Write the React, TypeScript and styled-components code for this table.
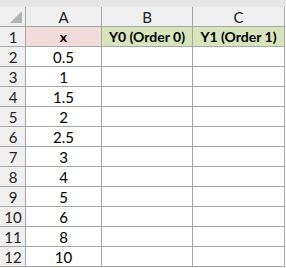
import React from "react";
import styled, { createGlobalStyle } from "styled-components";

const GlobalStyle = createGlobalStyle`
  html, body {
    margin: 0;
    padding: 0;
    background: #ffffff;
    font-family: Lato, "Liberation Sans", sans-serif;
  }
`;

const Sheet = styled.div`
  width: 286px;
  height: 268px;
  overflow: hidden;
  background: #ffffff;
`;

const TopStrip = styled.div`
  height: 7px;
  background: #e6e6e6;
`;

const Grid = styled.div`
  display: grid;
  grid-template-columns: 26px 76px 91px 92px 1fr;
  grid-auto-rows: 20px;
`;

const Cell = styled.div<{ $bg?: string; $bold?: boolean; $head?: boolean }>`
  box-sizing: border-box;
  display: flex;
  align-items: center;
  justify-content: center;
  border-right: 1px solid #a6a6a6;
  border-bottom: 1px solid #a6a6a6;
  background: ${(p) => p.$bg || "#ffffff"};
  font-size: ${(p) => (p.$bold ? "14px" : "15px")};
  font-weight: ${(p) => (p.$bold ? 700 : 400)};
  color: ${(p) => (p.$head ? "#222222" : "#000000")};
  white-space: nowrap;
  overflow: hidden;
`;

const Gap = styled.div`
  background: #ffffff;
`;

const Corner = styled(Cell)`
  background: #f0f0f0;
  align-items: flex-end;
  justify-content: flex-end;
  padding: 0 3px 3px 0;
`;

const RowHead = styled(Cell)`
  background: #f0f0f0;
  padding-left: 1px;
`;

const ColHead = styled(Cell)`
  background: #f0f0f0;
`;

const x = ["0.5", "1", "1.5", "2", "2.5", "3", "4", "5", "6", "8", "10"];

const App: React.FC = () => {
  return (
    <Sheet>
      <GlobalStyle />
      <TopStrip />
      <Grid>
        <Corner $head>
          <svg width="12" height="12" viewBox="0 0 12 12">
            <polygon points="12,0 12,12 0,12" fill="#b4b4b4" />
          </svg>
        </Corner>
        <ColHead $head>A</ColHead>
        <ColHead $head>B</ColHead>
        <ColHead $head>C</ColHead>
        <Gap />

        <RowHead $head>1</RowHead>
        <Cell $bg="#f2dcdb" $bold>x</Cell>
        <Cell $bg="#d8e4bc" $bold>Y0 (Order 0)</Cell>
        <Cell $bg="#d8e4bc" $bold>Y1 (Order 1)</Cell>
        <Gap />

        {x.map((v, i) => (
          <React.Fragment key={v}>
            <RowHead $head>{i + 2}</RowHead>
            <Cell>{v}</Cell>
            <Cell />
            <Cell />
            <Gap />
          </React.Fragment>
        ))}
      </Grid>
    </Sheet>
  );
};

export default App;
